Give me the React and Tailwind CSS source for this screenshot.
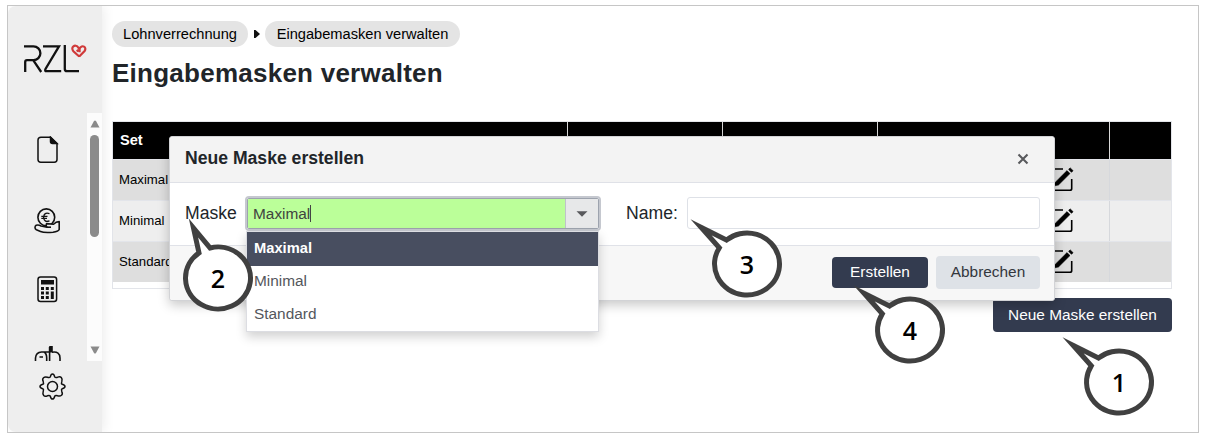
const columns = ['Set', '', '', '', ''];
const rows = ['Maximal', 'Minimal', 'Standard'];
const callouts = [
  { n: '1', x: 1119, y: 381.5, kind: 'side' },
  { n: '2', x: 218, y: 277.5, kind: 'top' },
  { n: '3', x: 747, y: 263.5, kind: 'side' },
  { n: '4', x: 910, y: 329.5, kind: 'side' },
];
const tails = {
  side: 'M-20.5 -24.05 L-46 -36.8 L-27.7 -16.2 A32.5 31 0 1 0 -20.5 -24.05 Z',
  top: 'M-8 -30.05 L-24.5 -50 L-19 -25.15 A32.5 31 0 1 0 -8 -30.05 Z',
};

function Logo() {
  return (
    <svg className="block" width="64" height="32" viewBox="23 43 64 32" fill="none">
      <path d="M25.2 72V62Q25.2 60.2 27 60.2H33.5A6.6 6.6 0 0 0 33.5 46.4H24M33.2 60.2L41.2 72M43 46.4H59L45.5 69Q44.5 71.2 46.5 71.2H61.2M64.8 45V69Q64.8 71.2 67 71.2H79" stroke="#111" strokeWidth="2.3" />
      <path d="M79.2 56.5L73.4 51.3C70 47.2 75.3 43.6 78 47.2L79.6 49V52.2M76.6 51.2L78.6 50M79.6 48.6C82 43.8 87.3 47.3 84.6 51L79.2 56.5" stroke="#d03a3a" strokeWidth="2.2" />
    </svg>
  );
}

function DocIcon() {
  return (
    <svg className="block" width="22" height="28" viewBox="0 0 22 28" fill="none" stroke="#111" strokeWidth="1.5">
      <path d="M4 1.2H13.5L20 7.5V23.5Q20 26.2 17.3 26.2H3.7Q1 26.2 1 23.5V4Q1 1.2 4 1.2Z" />
      <path d="M13.5 1.2V5.5Q13.5 7.5 15.5 7.5H20Z" fill="#111" />
    </svg>
  );
}

function CoinHandIcon() {
  return (
    <svg className="block" width="27" height="26" viewBox="0 0 27 26" fill="none" stroke="#111" strokeWidth="1.6">
      <circle cx="12.3" cy="9.3" r="8.4" />
      <path d="M15.5 5.6Q10 3.7 9.6 9.3Q10 14.8 15.5 12.8M7.3 8.4H13.5M7.3 10.4H13" strokeWidth="1.3" />
      <path d="M2.2 17.3Q4.5 16.6 7 18L13 19.2Q11.5 17.5 12.5 15.6L19.5 16.2Q22 13.6 25.2 13.6V21.5Q24.5 23.4 19 24.2Q10 25 6.5 23.4L2.4 21.8Q1 21 1 19.5T2.2 17.3Z" fill="#eee" strokeLinejoin="round" />
      <path d="M13 19.2H17" />
    </svg>
  );
}

function CalcIcon() {
  return (
    <svg className="block" width="21" height="27" viewBox="0 0 21 27">
      <rect x="1" y="1" width="18.6" height="24.6" rx="2.5" fill="none" stroke="#111" strokeWidth="1.5" />
      <path d="M4 4H17V8.5H4ZM4 11H7V14H4ZM8.8 11H11.8V14H8.8ZM13.8 11H16.8V14H13.8ZM4 15.5H7V18.5H4ZM8.8 15.5H11.8V18.5H8.8ZM4 20H7V23H4ZM8.8 20H11.8V23H8.8ZM13.8 15.5H16.8V23H13.8Z" fill="#111" />
    </svg>
  );
}

function PartialIcon() {
  return (
    <svg className="block" width="28" height="15" viewBox="0 0 28 15" fill="none" stroke="#111" strokeWidth="1.6">
      <path d="M1.5 15V12Q2 6.2 7.5 6H10Q12.7 7.5 12.7 12V15M5.5 11H9M10 6H15.5M15.6 15V1M18 6.2Q26 5 26 12V15" />
      <path d="M17 0V6.5" strokeWidth="3.6" />
    </svg>
  );
}

function GearIcon() {
  return (
    <svg className="block" width="27" height="27" viewBox="0 0 27 27" fill="none" stroke="#111" strokeWidth="1.5" strokeLinejoin="round">
      <circle cx="13.5" cy="13.5" r="5" />
      <path d="M11.3 3.8Q12 1 13.5 1T15.7 3.8Q16.5 5 18.6 4.2Q21 3 22.3 4.5T22.8 8.4Q22 10.5 23.2 11.3Q26 12 26 13.5T23.2 15.7Q22 16.5 22.8 18.6Q24 21 22.5 22.3T18.6 22.8Q16.5 22 15.7 23.2Q15 26 13.5 26T11.3 23.2Q10.5 22 8.4 22.8Q6 24 4.7 22.5T4.2 18.6Q5 16.5 3.8 15.7Q1 15 1 13.5T3.8 11.3Q5 10.5 4.2 8.4Q3 6 4.5 4.7T8.4 4.2Q10.5 5 11.3 3.8Z" />
    </svg>
  );
}

function EditIcon() {
  return (
    <svg className="block" width="25" height="25" viewBox="0 0 25 25" fill="none" stroke="#000">
      <path d="M14 2H3Q1.5 2 1.5 3.5V21.5Q1.5 23.3 3 23.3H21Q22.7 23.3 22.7 21.5V12" strokeWidth="1.6" />
      <path d="M5 19L6.3 15.2L18 3.6L21 6.6L9.5 18Z" fill="#000" strokeWidth="0.5" />
      <path d="M19.7 2.4L21.2 0.9L24 3.7L22.5 5.2Z" fill="#000" strokeWidth="0.8" />
    </svg>
  );
}

function Callout({ n, x, y, kind }) {
  return (
    <div className="absolute z-40 flex h-[140px] w-[140px] items-center justify-center" style={{ left: x - 70, top: y - 70 }}>
      <svg className="absolute inset-0" width="140" height="140" viewBox="-70 -70 140 140">
        <path d={tails[kind]} fill="#fff" stroke="#404040" strokeWidth="5" strokeMiterlimit="20" />
      </svg>
      <span className="relative pt-[2px] font-['Open_Sans',sans-serif] text-[25px] leading-none font-semibold text-black">{n}</span>
    </div>
  );
}

function Sidebar() {
  return (
    <aside className="relative z-10 flex w-[94px] shrink-0 flex-col rounded-l-lg bg-[#eeeeee] shadow-[2px_0_12px_rgba(0,0,0,0.08)]">
      <div className="h-[107px] pt-[37px] pl-[15px]">
        <Logo />
      </div>
      <div className="flex h-[248px]">
        <div className="flex w-[79px] flex-col overflow-hidden">
          <div className="h-[72px] shrink-0 pt-[23px] pl-[29px]"><DocIcon /></div>
          <div className="h-[69px] shrink-0 pt-[23px] pl-[26px]"><CoinHandIcon /></div>
          <div className="h-[70px] shrink-0 pt-[22px] pl-[29px]"><CalcIcon /></div>
          <div className="h-[37px] shrink-0 pt-[22px] pl-[26px]"><PartialIcon /></div>
        </div>
        <div className="flex w-[15px] flex-col items-center bg-[#fcfcfc] pt-[7px] pb-[7px]">
          <svg className="block shrink-0" width="10" height="8" viewBox="0 0 10 8"><path d="M4 1Q5 0 6 1L9.5 7.5H0.5Z" fill="#8b8b8b" /></svg>
          <div className="mt-[7px] h-[102px] w-[9px] rounded-full bg-[#8b8b8b]" />
          <svg className="mt-auto block shrink-0" width="10" height="8" viewBox="0 0 10 8"><path d="M4 7Q5 8 6 7L9.5 0.5H0.5Z" fill="#8b8b8b" /></svg>
        </div>
      </div>
      <div className="pt-[12px] pl-[31px]"><GearIcon /></div>
    </aside>
  );
}

function MaskTable() {
  return (
    <div className="mt-[32px] h-[168px] w-[1060px] border border-[#e3e5ea] bg-white">
      <div className="grid h-[37px] grid-cols-[455px_155px_155px_232px_61px] bg-black">
        {columns.map((c, i) => (
          <div key={i} className="border-r border-[#d8d8d8] pl-[7px] text-[14.6px] leading-[37px] font-bold text-white last:border-r-0">{c}</div>
        ))}
      </div>
      {rows.map((r) => (
        <div key={r} className="grid h-[41px] grid-cols-[455px_155px_155px_232px_61px] border-t border-[#e3e5ea] odd:bg-[#eeeeee] even:bg-[#dedede]">
          <div className="pl-[6px] text-[13.2px] leading-[40px] text-black">{r}</div>
          <div />
          <div />
          <div className="flex items-start border-r border-[#d6d8dc] pt-[7px] pl-[171px]"><EditIcon /></div>
          <div />
        </div>
      ))}
    </div>
  );
}

function Dialog() {
  return (
    <section className="absolute top-[136px] left-[169px] z-20 flex h-[165px] w-[886px] flex-col rounded-[3px] border border-[#d2d3d6] bg-white shadow-[0_4px_12px_rgba(0,0,0,0.22)]">
      <header className="flex h-[46px] items-center justify-between rounded-t-[3px] border-b border-[#dfe1e7] bg-[#f3f3f3] pr-[25px] pl-[15px]">
        <h2 className="pb-[1px] text-[17.6px] leading-none font-bold text-[#212529]">Neue Maske erstellen</h2>
        <svg className="mb-[2px] block" width="12" height="12" viewBox="0 0 12 12"><path d="M1.5 1.5L10.5 10.5M10.5 1.5L1.5 10.5" stroke="#58595c" strokeWidth="2.1" /></svg>
      </header>
      <div className="flex h-[63px] items-start border-b border-[#e0e2e8] pt-[13px] text-[17.6px] text-[#212529]">
        <label className="w-[75px] pl-[15px] leading-[34px]">Maske</label>
        <div className="flex h-[35px] w-[356px] rounded-[4px] border-2 border-[#c5c8cf]">
          <div className="flex flex-1 overflow-hidden rounded-[2px] border border-[#9da3ae]">
            <div className="flex flex-1 items-center bg-[#bbff99] pl-[5px] text-[15.4px] leading-none text-[#40443f]">
              Maximal<span className="h-[17px] w-px bg-[#444]" />
            </div>
            <div className="flex w-[33px] items-center justify-center border-l border-[#bfc3ca] bg-[#e7e8e9]">
              <svg className="block" width="12" height="6" viewBox="0 0 12 6"><path d="M0.5 0.3H11.5L6 5.8Z" fill="#58595c" /></svg>
            </div>
          </div>
        </div>
        <label className="w-[86px] pl-[25px] leading-[34px]">Name:</label>
        <div className="mt-[1px] h-[32px] w-[353px] rounded-[3px] border border-[#dee1e7] bg-white" />
      </div>
      <footer className="flex flex-1 items-start justify-end gap-[8px] rounded-b-[3px] bg-[#f7f7f7] pt-[10px] pr-[14px] text-[15.4px]">
        <button className="mt-[1px] h-[31px] w-[96px] rounded-[4px] bg-[#333b4f] pb-[2px] leading-[29px] text-white">Erstellen</button>
        <button className="h-[33px] w-[104px] rounded-[4px] bg-[#dee2e7] pb-[2px] leading-[31px] text-[#33373d]">Abbrechen</button>
      </footer>
    </section>
  );
}

function Dropdown() {
  return (
    <ul className="absolute top-[231px] left-[246px] z-30 flex h-[101px] w-[353px] flex-col border border-[#dcdde2] bg-white text-[15.4px] text-[#54575c] shadow-[0_5px_10px_rgba(0,0,0,0.18)]">
      <li className="h-[34px] bg-[#484e60] pl-[7px] text-[14.7px] leading-[32px] font-bold text-white">Maximal</li>
      <li className="h-[33px] pl-[7px] leading-[30px]">Minimal</li>
      <li className="h-[33px] pl-[7px] leading-[32px]">Standard</li>
    </ul>
  );
}

export default function App() {
  return (
    <div className="relative h-[440px] w-[1208px] overflow-hidden bg-white pt-[5px] pl-[7px] font-['Liberation_Sans',Arial,sans-serif]">
      <div className="flex h-[428px] w-[1192px] overflow-hidden border border-[#c6c6c6] bg-white">
        <Sidebar />
        <main className="flex flex-1 flex-col pt-[15px] pl-[10px]">
          <nav className="flex h-[26px] items-center text-[14.65px] text-black">
            <span className="h-[26px] w-[136px] rounded-full bg-[#e4e4e4] text-center leading-[26px]">Lohnverrechnung</span>
            <svg className="mr-[5px] ml-[6px] block" width="6" height="8" viewBox="0 0 6 8"><path d="M0 0H1.5L6 4L1.5 8H0Z" fill="#111" /></svg>
            <span className="h-[26px] w-[195px] rounded-full bg-[#e4e4e4] text-center leading-[26px]">Eingabemasken verwalten</span>
          </nav>
          <h1 className="mt-[10px] h-[32px] text-[26px] leading-[32px] font-bold tracking-[0.25px] text-[#212529]">Eingabemasken verwalten</h1>
          <MaskTable />
          <button className="mt-[9px] ml-[881px] h-[34px] w-[179px] shrink-0 rounded-[4px] bg-[#333b4f] text-[15.4px] leading-[32px] text-white">Neue Maske erstellen</button>
        </main>
      </div>
      <Dialog />
      <Dropdown />
      {callouts.map((c) => (
        <Callout key={c.n} {...c} />
      ))}
    </div>
  );
}
